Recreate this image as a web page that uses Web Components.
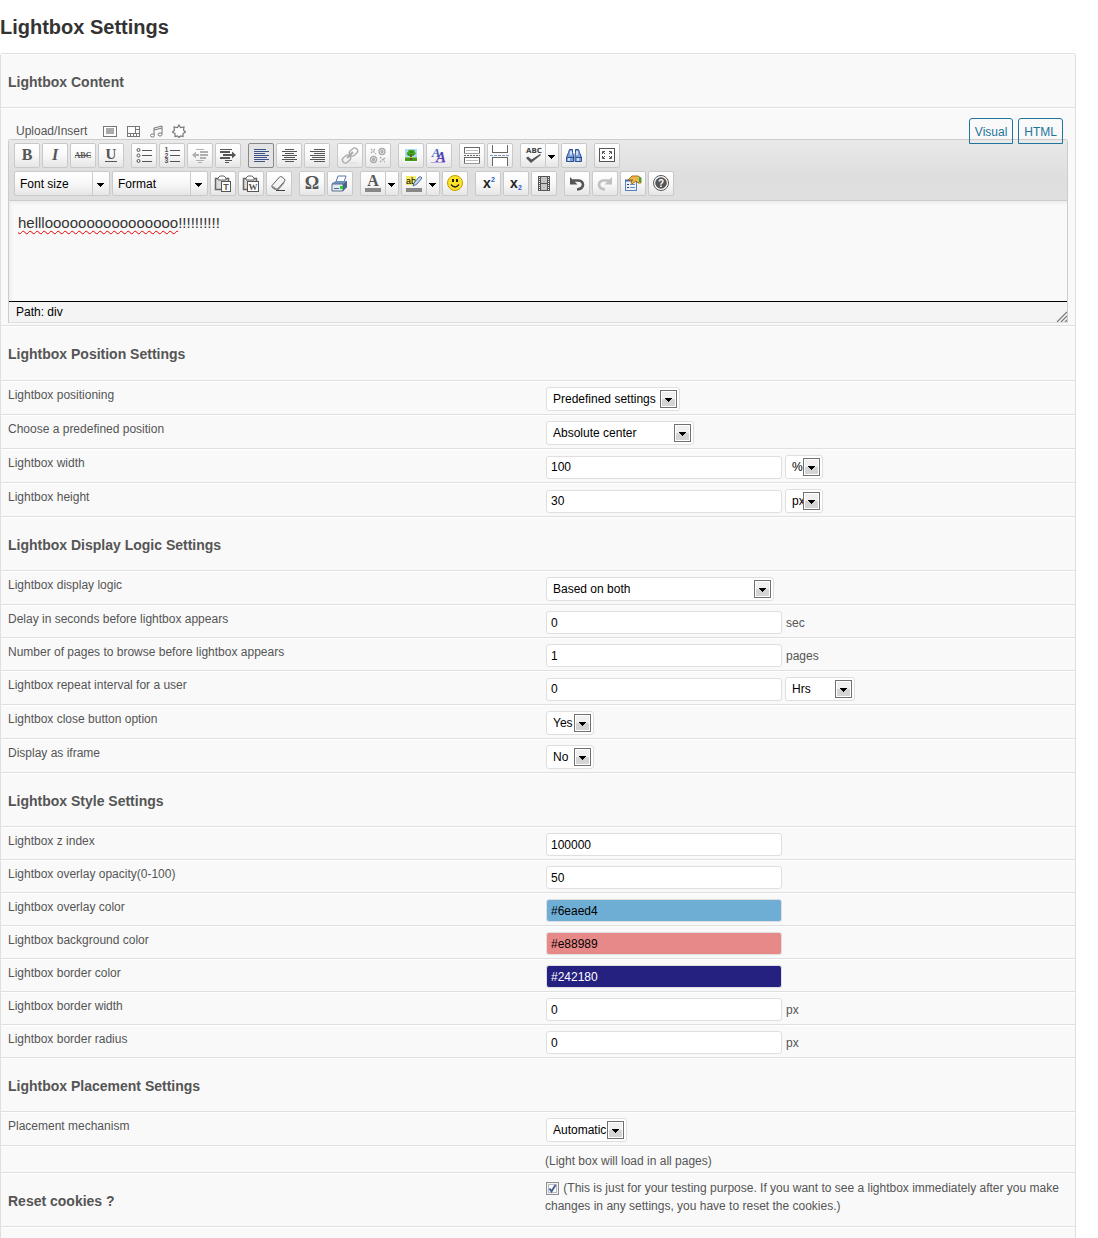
<!DOCTYPE html>
<html lang="en">
<head>
<meta charset="utf-8">
<title>Lightbox Settings</title>
<style>
  body { margin: 0; background: #fff; color: #555; font: 12px/18px "Liberation Sans", Arial, sans-serif; }
</style>
</head>
<body>
<settings-page heading="Lightbox Settings">
  <section-title>Lightbox Content</section-title>
  <editor-row>
    <rich-editor></rich-editor>
  </editor-row>

  <section-title roomy>Lightbox Position Settings</section-title>
  <setting-row><label slot="label" for="positioning">Lightbox positioning</label>
    <select-box style="--w:134px"><select id="positioning"><option>Predefined settings</option><option>Custom settings</option></select></select-box></setting-row>
  <setting-row><label slot="label" for="position">Choose a predefined position</label>
    <select-box style="--w:148px"><select id="position"><option>Absolute center</option><option>Top left</option></select></select-box></setting-row>
  <setting-row><label slot="label" for="width">Lightbox width</label>
    <input id="width" type="text" value="100"><select-box style="--w:38px"><select aria-label="Width unit"><option>%</option><option>px</option></select></select-box></setting-row>
  <setting-row><label slot="label" for="height">Lightbox height</label>
    <input id="height" type="text" value="30"><select-box style="--w:38px"><select aria-label="Height unit"><option>px</option><option>%</option></select></select-box></setting-row>

  <section-title>Lightbox Display Logic Settings</section-title>
  <setting-row><label slot="label" for="logic">Lightbox display logic</label>
    <select-box style="--w:228px"><select id="logic"><option>Based on both</option><option>Based on delay</option></select></select-box></setting-row>
  <setting-row><label slot="label" for="delay">Delay in seconds before lightbox appears</label>
    <input id="delay" type="text" value="0"><span>sec</span></setting-row>
  <setting-row><label slot="label" for="pages">Number of pages to browse before lightbox appears</label>
    <input id="pages" type="text" value="1"><span>pages</span></setting-row>
  <setting-row><label slot="label" for="repeat">Lightbox repeat interval for a user</label>
    <input id="repeat" type="text" value="0"><select-box style="--w:70px"><select aria-label="Interval unit"><option>Hrs</option><option>Days</option></select></select-box></setting-row>
  <setting-row><label slot="label" for="close">Lightbox close button option</label>
    <select-box style="--w:48px"><select id="close"><option>Yes</option><option>No</option></select></select-box></setting-row>
  <setting-row><label slot="label" for="iframe">Display as iframe</label>
    <select-box style="--w:48px"><select id="iframe"><option>No</option><option>Yes</option></select></select-box></setting-row>

  <section-title>Lightbox Style Settings</section-title>
  <setting-row><label slot="label" for="zindex">Lightbox z index</label><input id="zindex" type="text" value="100000"></setting-row>
  <setting-row><label slot="label" for="opacity">Lightbox overlay opacity(0-100)</label><input id="opacity" type="text" value="50"></setting-row>
  <setting-row><label slot="label" for="overlay">Lightbox overlay color</label><input id="overlay" type="text" value="#6eaed4" style="background:#6eaed4"></setting-row>
  <setting-row><label slot="label" for="bg">Lightbox background color</label><input id="bg" type="text" value="#e88989" style="background:#e88989"></setting-row>
  <setting-row><label slot="label" for="border">Lightbox border color</label><input id="border" type="text" value="#242180" style="background:#242180;color:#fff"></setting-row>
  <setting-row><label slot="label" for="bwidth">Lightbox border width</label><input id="bwidth" type="text" value="0"><span>px</span></setting-row>
  <setting-row><label slot="label" for="radius">Lightbox border radius</label><input id="radius" type="text" value="0"><span>px</span></setting-row>

  <section-title>Lightbox Placement Settings</section-title>
  <setting-row><label slot="label" for="placement">Placement mechanism</label>
    <select-box style="--w:81px"><select id="placement"><option>Automatic</option><option>Manual</option></select></select-box></setting-row>
  <note-row>(Light box will load in all pages)</note-row>
  <note-row><section-title slot="title" plain>Reset cookies ?</section-title><tick-note></tick-note></note-row>
</settings-page>

<script>
const define = (name, html, setup) => {
  const template = document.createElement('template');
  template.innerHTML = html;
  customElements.define(name, class extends HTMLElement {
    connectedCallback() {
      if (this.shadowRoot) return;
      this.attachShadow({ mode: 'open' }).append(template.content.cloneNode(true));
      if (setup) setup.call(this, this.shadowRoot);
    }
  });
};

define('settings-page', `
  <style>
    :host { display: block; padding-right: 22px; }
    h2 { margin: 0; padding: 12px 0 11px; font-size: 20px; line-height: 30px; font-weight: bold; color: #333; }
    .panel { border: 1px solid #dfdfdf; border-bottom: 0; border-radius: 3px 3px 0 0; background: #f9f9f9; padding-bottom: 11px; }
    .panel::after { content: ""; display: block; border-top: 1px solid #fff; }
  </style>
  <h2></h2>
  <form class="panel"><slot></slot></form>`,
  function (root) { root.querySelector('h2').textContent = this.getAttribute('heading'); });

define('section-title', `
  <style>
    :host { display: block; padding: 18px 7px 16px; border-top: 1px solid #fff; border-bottom: 1px solid #dfdfdf; }
    :host([roomy]) { padding-bottom: 17px; }
    :host([plain]) { border: 0; padding: 18px 0 16px; }
    h3 { margin: 0; font-size: 14px; line-height: 18px; font-weight: bold; color: #555; }
  </style>
  <h3><slot></slot></h3>`);

define('editor-row', `
  <style>:host { display: block; padding: 0 7px 2px; border-top: 1px solid #fff; border-bottom: 1px solid #dfdfdf; }</style>
  <slot></slot>`);

define('setting-row', `
  <style>
    :host { display: grid; grid-template-columns: 1fr 1fr; border-top: 1px solid #fff; border-bottom: 1px solid #dfdfdf; }
    .label { padding: 4px 7px; height: 18px; }
    .field { display: flex; align-items: center; gap: 3px; padding: 5px 8px 3px; }
    ::slotted(input) { box-sizing: border-box; width: 236px; height: 23px; margin: 0; padding: 0 4px; border: 1px solid #dfdfdf; border-radius: 3px; background: #fff; color: #000; font: inherit; }
    ::slotted(span) { margin-left: 1px; }
  </style>
  <div class="label"><slot name="label"></slot></div>
  <div class="field"><slot></slot></div>`);

define('select-box', `
  <style>
    :host { display: inline-grid; width: var(--w); align-items: center; }
    ::slotted(select) { grid-area: 1 / 1; appearance: none; box-sizing: border-box; width: 100%; height: 24px; margin: 0; padding: 0 0 0 6px; border: 1px solid #dfdfdf; border-radius: 3px; background: #fff; color: #000; font: inherit; }
    svg { grid-area: 1 / 1; justify-self: end; margin-right: 3px; pointer-events: none; z-index: 1; }
  </style>
  <slot></slot>
  <svg width="17" height="18" shape-rendering="crispEdges" aria-hidden="true">
    <rect x=".5" y=".5" width="16" height="17" fill="#fff" stroke="#707070"/>
    <rect x="2" y="2" width="13" height="7" fill="#f0f0f0"/><rect x="2" y="9" width="13" height="7" fill="#d4d4d4"/>
    <path d="M5 8h7v1H5zM6 9h5v1H6zM7 10h3v1H7zM8 11h1v1H8z" fill="#000"/>
  </svg>`);

define('note-row', `
  <style>
    :host { display: grid; grid-template-columns: 1fr 1fr; border-top: 1px solid #fff; border-bottom: 1px solid #dfdfdf; }
    div { padding: 0 7px; }
    .text { padding: 5px 7px 2px; }
  </style>
  <div><slot name="title"></slot></div>
  <div class="text"><slot></slot></div>`);

define('tick-note', `
  <style>
    :host { display: block; }
    .box { display: inline-grid; vertical-align: -3px; margin: 0 1px; }
    input { appearance: none; grid-area: 1 / 1; width: 13px; height: 13px; margin: 0; border: 1px solid #8e8f8f; background: #fff; box-shadow: inset 0 0 0 1px #f4f4f4, inset 0 0 0 2px #b8bcc4; }
    svg { grid-area: 1 / 1; pointer-events: none; visibility: hidden; }
    input:checked + svg { visibility: visible; }
  </style>
  <label><span class="box"><input type="checkbox" checked><svg width="13" height="13" aria-hidden="true"><path d="M3.5 6.5L5.5 9.5L9.5 3" fill="none" stroke="#4b5f97" stroke-width="2"/></svg></span>
  (This is just for your testing purpose. If you want to see a lightbox immediately after you make changes in any settings, you have to reset the cookies.)</label>`);

/* Toolbar glyphs, drawn on a 24 x 23 canvas that fills the button face. */
const D = '#555';
const bars = (color, list) => list.map(([x, y, w]) => `<rect x="${x}" y="${y}" width="${w}" height="1" fill="${color}" shape-rendering="crispEdges"/>`).join('');
const letter = (t, x, y, size, extra = '') => `<text x="${x}" y="${y}" font-size="${size}" font-weight="bold" font-family="Liberation Serif, serif" text-anchor="middle" fill="${D}" ${extra}>${t}</text>`;
const sans = 'style="font-family:\'Liberation Sans\',sans-serif"';
const ICONS = {
  bold: letter('B', 12, 16, 16),
  italic: letter('I', 12, 16, 16, 'font-style="italic"'),
  strike: letter('ABC', 12, 14, 8) + bars(D, [[4, 11, 16]]),
  underline: letter('U', 12, 15, 15) + bars(D, [[6, 17, 12]]),
  bullets: [6, 11.5, 17].map(y => `<circle cx="6.5" cy="${y}" r="1.5" fill="none" stroke="${D}"/>`).join('') + bars(D, [[10, 6, 10], [10, 11, 10], [10, 17, 10]]),
  numbers: [8, 13.5, 19].map((y, i) => letter(i + 1, 6.5, y, 7, sans)).join('') + bars(D, [[10, 6, 10], [10, 11, 10], [10, 17, 10]]),
  outdent: `<g fill="#b0b0b0" shape-rendering="crispEdges"><path d="M8 5h8v1H8zM12 7h8v2h-8zM12 10h8v2h-8zM12 13h6v2h-6zM8 16h8v1H8zM10 18h4v1h-4z"/></g><path d="M4 11l4-3.500v2.500h3v2H8v2.500z" fill="#b0b0b0"/>`,
  indent: `<g fill="${D}" shape-rendering="crispEdges"><path d="M4 5h12v1H4zM4 7h10v2H4zM7 10h6v2H7zM4 13h10v2H4zM9 16h7v1H9zM9 18h4v1H9z"/></g><path d="M20 11l-4-3.500v2.500h-3v2h3v2.500z" fill="${D}"/>`,
  left: bars('#3a5488', [[5, 5, 12], [5, 7, 15], [5, 9, 11], [5, 11, 15], [5, 13, 13], [5, 15, 15], [5, 17, 11]]),
  center: bars(D, [[8, 5, 9], [5, 7, 15], [8, 9, 9], [5, 11, 15], [7, 13, 11], [5, 15, 15], [8, 17, 9]]),
  right: bars(D, [[9, 5, 11], [5, 7, 15], [9, 9, 11], [5, 11, 15], [7, 13, 13], [5, 15, 15], [9, 17, 11]]),
  link: `<g fill="none" stroke="#aaa" stroke-width="1.300"><rect x="11" y="5" width="9" height="6" rx="3" transform="rotate(-42 15.500 8)"/><rect x="4" y="12" width="9" height="6" rx="3" transform="rotate(-42 8.500 15)"/><path d="M9 14l6-6" stroke-width="2"/></g><path d="M11 19h8" stroke="#ddd"/>`,
  unlink: `<g fill="none" stroke="#aaa" stroke-width="1.300"><circle cx="16" cy="7.500" r="3"/><circle cx="16" cy="7.500" r="1"/><circle cx="7.500" cy="15.500" r="3"/><circle cx="7.500" cy="15.500" r="1"/><path d="M5 5l5 5M5 9l2-2M9 5L7 7M14 13l5 5M14 18l2-2M19 14l-3 2" stroke-dasharray="2 1"/></g>`,
  image: `<rect x="5" y="4" width="14" height="14" fill="#fff"/><rect x="6" y="5" width="12" height="8" fill="#a9d8fa"/><rect x="6" y="14" width="12" height="3" fill="#3f9a1e"/><rect x="11" y="11" width="2" height="5" fill="#7a4a1a"/><path d="M8 11q-1-3 1-3 0-3 3-2 4-1 4 2 2 2-1 3-3 1-7 0z" fill="#4aa81c"/><path d="M9 11h6M11 8h3" stroke="#226a0c"/><rect x="6" y="13" width="12" height="1" fill="#8ccf4a"/>`,
  style: `<text x="9" y="13" font-size="13" font-weight="bold" font-style="italic" font-family="Liberation Serif,serif" text-anchor="middle" fill="#3a62b8">A</text><text x="14" y="18" font-size="15" font-weight="bold" font-style="italic" font-family="Liberation Serif,serif" text-anchor="middle" fill="#5b3fb8">A</text><path d="M4 18.500h14" stroke="#b9a6dc"/>`,
  more: `<g fill="#fff" stroke="#666" shape-rendering="crispEdges"><path d="M4.500 9V3.500h15V9M4.500 19v-5.500h15V19"/><path d="M6 6.500h12M6 16.500h12" stroke="#bbb"/><path d="M4 9.500h16M4 19.500h16" stroke="#999"/><path d="M4 11.500h16" stroke-dasharray="2 1"/></g>`,
  page: `<g fill="#fff" stroke="#666" shape-rendering="crispEdges"><path d="M4.500 1v7.500h15V1M4.500 22v-8.500h15V22"/><path d="M2 11.500h20" stroke="#7a9bc8" stroke-dasharray="3 1"/></g>`,
  spell: `<text x="13" y="9" font-size="7" font-weight="bold" font-family="DejaVu Sans,sans-serif" text-anchor="middle" fill="#444">ABC</text><path d="M5 14l5 5 10-8-1-1-8.500 5.500L7 12.500z" fill="#555"/>`,
  search: `<g fill="#7fa3d8" stroke="#2c4f92"><path d="M7.500 5.500h3v3l1 3v6H4.500v-4l2-5zM13.500 5.500h3l1 3 2 5v4h-6.500v-6l.500-3z"/><path d="M5 13.500h6M13.500 13.500H20"/></g><path d="M7 14v3M16 14v3M9 7v4M15 7v4" stroke="#e8f1ff" stroke-width="1.500"/>`,
  full: `<rect x="4.500" y="4.500" width="15" height="13" fill="#fff" stroke="#555"/><g fill="none" stroke="#555"><path d="M7.500 10V7.500H10M14 7.500h2.500V10M16.500 12v2.500H14M10 14.500H7.500V12M8 8l2 2M16 8l-2 2M16 14l-2-2M8 14l2-2"/></g>`,
  pasteText: `<path d="M4.500 6.500h13v11h-13z" fill="#ddd" stroke="#666" stroke-width="1.500"/><path d="M7 8V6l2-2h4l2 2v2z" fill="#fff" stroke="#666"/><rect x="10.500" y="9.500" width="9" height="10" fill="#fff" stroke="#555"/>` + letter('T', 15, 18, 9, sans),
  pasteWord: `<path d="M4.500 6.500h13v11h-13z" fill="#ddd" stroke="#666" stroke-width="1.500"/><path d="M7 8V6l2-2h4l2 2v2z" fill="#fff" stroke="#666"/><rect x="8.500" y="9.500" width="11" height="10" fill="#fff" stroke="#555"/>` + letter('W', 14, 18, 9),
  eraser: `<path d="M5 13.500L12.500 5q1-1 2.500 0l2.500 2q1 1 0 2.200L10.500 17q-1 1-2.500 0L5.300 15.500q-1-1-.3-2z" fill="#f4f4f4" stroke="#666"/><path d="M5 13.500l5.500 3.500 7-8v2l-6 7H8l-3-2z" fill="#888"/><path d="M9 18.500h9" stroke="#444"/>`,
  omega: letter('Ω', 12, 17, 18),
  print: `<path d="M8 10l2-6h8l-2 6z" fill="#fff" stroke="#5a7ba8"/><path d="M4 11l4-2h11v6l-4 4H4z" fill="#6f93bf"/><path d="M4 12h11v7H4z" fill="#e3eaf2" stroke="#5b6f8c"/><path d="M15 12l4-3v6l-4 4z" fill="#4a6388"/><rect x="12" y="14" width="3" height="3" fill="#20d820"/><path d="M6 16.500h5" stroke="#55688a"/>`,
  color: letter('A', 12, 14, 16) + `<rect x="4" y="16" width="16" height="4" fill="#888"/>`,
  highlight: `<rect x="4" y="4" width="10" height="9" fill="#f6ec6a"/><text x="9" y="12" font-size="9" font-family="Liberation Sans,sans-serif" text-anchor="middle" fill="#000">ab</text><path d="M11 14l1-3 5-6q2-1 3 1l-5 6z" fill="#c8d8ee" stroke="#4f6f9f"/><rect x="4" y="16" width="16" height="4" fill="#888"/>`,
  smile: `<circle cx="12" cy="11" r="7.500" fill="#ffe325" stroke="#c89b00"/><path d="M8 12.500q4 5 8 0" fill="none" stroke="#222" stroke-width="1.300"/><rect x="9" y="7" width="2" height="3" fill="#222"/><rect x="13" y="7" width="2" height="3" fill="#222"/>`,
  sup: `<text x="11" y="16" font-size="14" font-weight="bold" font-family="Liberation Sans,sans-serif" text-anchor="middle" fill="#222">x</text><text x="17" y="10" font-size="7" font-weight="bold" font-family="Liberation Sans,sans-serif" text-anchor="middle" fill="#2a5fc8">2</text>`,
  sub: `<text x="10" y="16" font-size="14" font-weight="bold" font-family="Liberation Sans,sans-serif" text-anchor="middle" fill="#222">x</text><text x="16" y="18" font-size="7" font-weight="bold" font-family="Liberation Sans,sans-serif" text-anchor="middle" fill="#2a5fc8">2</text>`,
  film: `<rect x="6" y="4" width="12" height="15" fill="#555"/><path d="M7.500 5v14M16.500 5v14" stroke="#eee" stroke-dasharray="1 1"/><rect x="9" y="5" width="6" height="6" fill="#c4c4c4"/><rect x="9" y="12" width="6" height="6" fill="#c4c4c4"/>`,
  undo: `<path d="M7.500 8.500h6q4.500.500 4.500 4.500-.500 4-6 4.500" fill="none" stroke="#555" stroke-width="2.600"/><path d="M5 5v7.500h7.500z" fill="#555"/>`,
  redo: `<path d="M16.500 8.500h-6Q6 9 6 13q.500 4 6 4.500" fill="none" stroke="#c0c0c0" stroke-width="2.600"/><path d="M19 5v7.500h-7.500z" fill="#c0c0c0"/>`,
  props: `<rect x="4.500" y="8.500" width="11" height="10" fill="#eaf1fb" stroke="#5b7fb8"/><path d="M4 8.500h12" stroke="#3f68ae" stroke-width="2"/><path d="M9 12.500h5M9 15.500h5" stroke="#6f8cbc"/><path d="M6 12.500h2M6 15.500h2" stroke="#345"/><path d="M7 8l4-4h6l3 2v5h-3l-2-2-4 3-1-2 2-2z" fill="#e9b44c" stroke="#a87412"/><rect x="18" y="5" width="2" height="5" fill="#2faa4a"/>`,
  help: `<circle cx="12" cy="11" r="7.500" fill="#fff" stroke="#555"/><circle cx="12" cy="11" r="5.800" fill="#555"/><text x="12" y="15" font-size="10" font-weight="bold" font-family="Liberation Sans,sans-serif" text-anchor="middle" fill="#fff">?</text>`
};
const CARET = '<svg width="12" height="23" aria-hidden="true" shape-rendering="crispEdges"><path d="M2 11h7v1H2zM3 12h5v1H3zM4 13h3v1H4zM5 14h1v1H5z" fill="#000"/></svg>';
const FACE = 'box-sizing: border-box; height: 25px; margin: 0; padding: 0; border: 1px solid #c9c9c9; border-radius: 2px; background: linear-gradient(#fff, #f8f8f8 50%, #e6e6e6);';

define('tool-button', `
  <style>
    :host { display: flex; }
    button { ${FACE} width: 26px; }
    button.drop { width: 13px; border-left: 0; border-radius: 0 2px 2px 0; }
    :host([active]) button { border-color: #888; background: #e4e4e4; }
    svg { display: block; }
  </style>
  <button type="button" class="main"></button>`,
  function (root) {
    const name = this.getAttribute('icon');
    const button = root.querySelector('button');
    button.setAttribute('aria-label', name);
    button.innerHTML = `<svg width="24" height="23" aria-hidden="true">${ICONS[name]}</svg>`;
    if (this.hasAttribute('split')) {
      const drop = document.createElement('button');
      drop.type = 'button';
      drop.className = 'drop';
      drop.setAttribute('aria-label', name + ' options');
      drop.innerHTML = CARET;
      root.append(drop);
    }
  });

define('tool-list', `
  <style>
    :host { display: inline-grid; width: 96px; }
    select { ${FACE} grid-area: 1 / 1; appearance: none; width: 100%; padding-left: 5px; color: #000; font: inherit; }
    span { grid-area: 1 / 1; justify-self: end; padding: 1px 2px; border-left: 1px solid #ccc; pointer-events: none; margin-right: 1px; }
    svg { display: block; }
  </style>
  <select><option></option></select><span>${CARET}</span>`,
  function (root) {
    const text = this.getAttribute('text');
    root.querySelector('select').setAttribute('aria-label', text);
    root.querySelector('option').textContent = text;
  });

define('tool-group', `<style>:host { display: flex; gap: 2px; }</style><slot></slot>`);

define('rich-editor', `
  <style>
    :host { display: block; }
    .top { display: flex; justify-content: space-between; align-items: flex-start; height: 21px; padding: 9px 5px 0 8px; }
    .media { display: flex; align-items: center; margin-top: 4px; gap: 9px; }
    .media a { display: block; height: 14px; }
    .media span { margin-right: 6px; }
    .tabs { display: flex; gap: 5px; position: relative; z-index: 1; }
    .tabs button { box-sizing: border-box; height: 26px; padding: 2px 5px 0; border: 1px solid #21759b; border-radius: 3px 3px 0 0; background: none; color: #21759b; font: inherit; }
    .frame { border: 1px solid #ccc; border-bottom-color: #dfdfdf; border-radius: 3px 3px 0 0; }
    .bars { display: flex; flex-direction: column; gap: 3px; padding: 3px 5px 4px; border-bottom: 1px solid #ccc; background: linear-gradient(#e9e9e9, #dedede 60%, #dfdfdf); }
    .bar { display: flex; gap: 7px; }
    .body { box-sizing: border-box; height: 100px; padding: 12px 9px; outline: 0; font-size: 15px; line-height: 20px; color: #333; box-shadow: inset 2px 2px 3px #ececec; }
    .typo { text-decoration: underline wavy #e00 1px; text-underline-offset: 2px; text-decoration-skip-ink: none; }
    .status { display: flex; justify-content: space-between; align-items: flex-end; height: 20px; padding-left: 7px; border-top: 1px solid #000; background: #f4f4f4; color: #000; line-height: 20px; }
    .status a { color: inherit; text-decoration: none; }
    svg { display: block; }
  </style>
  <div class="top">
    <div class="media"><span>Upload/Insert</span>
      <a href="#" aria-label="Add an image"><svg width="15" height="14"><rect x="1" y="2" width="13" height="10" fill="#fff" stroke="#777" shape-rendering="crispEdges"/><rect x="4" y="4" width="8" height="6" fill="#aaa"/></svg></a>
      <a href="#" aria-label="Add video"><svg width="14" height="14" shape-rendering="crispEdges"><rect x="1" y="2" width="12" height="10" fill="#fff" stroke="#777"/><path d="M1 9h12M9 2v7M9 5h4M4 9v3M7 9v3M10 9v3" stroke="#777"/></svg></a>
      <a href="#" aria-label="Add audio"><svg width="14" height="14"><path d="M5 11V4l8-2v8M5 6l8-2" fill="none" stroke="#777"/><ellipse cx="3.500" cy="11.500" rx="2" ry="1.500" fill="#fff" stroke="#777"/><ellipse cx="11" cy="10.500" rx="2" ry="1.500" fill="#fff" stroke="#777"/></svg></a>
      <a href="#" aria-label="Add media"><svg width="14" height="14"><path d="M7 1l1.500 2.500 3.500-.5-.5 3L13.500 8l-2.500 1.500v3L8.500 12 7 13.500 5.500 12l-2.500.5v-3L.5 8l2-2L2 3l3.500.5z" fill="#fff" stroke="#777" stroke-width="1.200"/></svg></a>
    </div>
    <div class="tabs"><button type="button">Visual</button><button type="button">HTML</button></div>
  </div>
  <div class="frame">
    <div class="bars" role="toolbar">
      <div class="bar">
        <tool-group><tool-button icon="bold"></tool-button><tool-button icon="italic"></tool-button><tool-button icon="strike"></tool-button><tool-button icon="underline"></tool-button></tool-group>
        <tool-group><tool-button icon="bullets"></tool-button><tool-button icon="numbers"></tool-button><tool-button icon="outdent"></tool-button><tool-button icon="indent"></tool-button></tool-group>
        <tool-group><tool-button icon="left" active></tool-button><tool-button icon="center"></tool-button><tool-button icon="right"></tool-button></tool-group>
        <tool-group><tool-button icon="link"></tool-button><tool-button icon="unlink"></tool-button></tool-group>
        <tool-group><tool-button icon="image"></tool-button><tool-button icon="style"></tool-button></tool-group>
        <tool-group><tool-button icon="more"></tool-button><tool-button icon="page"></tool-button></tool-group>
        <tool-group><tool-button icon="spell" split></tool-button><tool-button icon="search"></tool-button></tool-group>
        <tool-group><tool-button icon="full"></tool-button></tool-group>
      </div>
      <div class="bar">
        <tool-group><tool-list text="Font size"></tool-list><tool-list text="Format"></tool-list><tool-button icon="pasteText"></tool-button><tool-button icon="pasteWord"></tool-button><tool-button icon="eraser"></tool-button></tool-group>
        <tool-group><tool-button icon="omega"></tool-button><tool-button icon="print"></tool-button></tool-group>
        <tool-group><tool-button icon="color" split></tool-button><tool-button icon="highlight" split></tool-button><tool-button icon="smile"></tool-button></tool-group>
        <tool-group><tool-button icon="sup"></tool-button><tool-button icon="sub"></tool-button><tool-button icon="film"></tool-button></tool-group>
        <tool-group><tool-button icon="undo"></tool-button><tool-button icon="redo"></tool-button><tool-button icon="props"></tool-button><tool-button icon="help"></tool-button></tool-group>
      </div>
    </div>
    <div class="body" contenteditable="true" role="textbox" aria-label="Lightbox content" spellcheck="false"><span class="typo">hellloooooooooooooooo</span>!!!!!!!!!!</div>
    <div class="status"><span>Path: <a href="#">div</a></span>
      <svg width="11" height="11" aria-hidden="true"><path d="M1 11L11 1M5 11l6-6M9 11l2-2" stroke="#777" stroke-width="1.200"/></svg></div>
  </div>`);
</script>
</body>
</html>
